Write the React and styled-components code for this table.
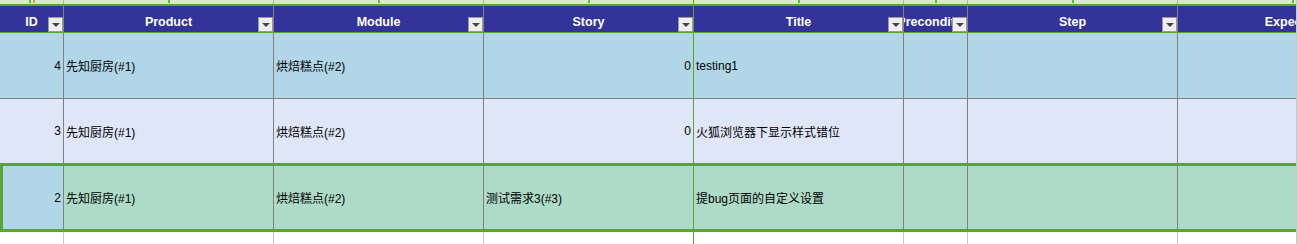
import React from 'react';
import styled, { createGlobalStyle } from 'styled-components';

const GREEN = '#5aa532';
const GRID = '#808080';
const LIGHT_GRID = '#c8c8c8';

const Global = createGlobalStyle`
  html, body { margin: 0; padding: 0; background: #ffffff; overflow: hidden; }
  body { font-family: "Liberation Sans", "Noto Sans CJK SC", sans-serif; }
`;

const columns = [
  { key: 'id', label: 'ID', w: 64, num: true },
  { key: 'product', label: 'Product', w: 210 },
  { key: 'module', label: 'Module', w: 210 },
  { key: 'story', label: 'Story', w: 210, num: true, green: true },
  { key: 'title', label: 'Title', w: 210 },
  { key: 'pre', label: 'Precondition', w: 64 },
  { key: 'step', label: 'Step', w: 210 },
  { key: 'exp', label: 'Expected', w: 230 },
];

const rows = [
  { tone: 'blue', id: '4', product: '先知厨房(#1)', module: '烘焙糕点(#2)', story: '0', title: 'testing1' },
  { tone: 'lav', id: '3', product: '先知厨房(#1)', module: '烘焙糕点(#2)', story: '0', title: '火狐浏览器下显示样式错位' },
  { tone: 'sel', id: '2', product: '先知厨房(#1)', module: '烘焙糕点(#2)', story: '测试需求3(#3)', title: '提bug页面的自定义设置' },
];

const tones = { blue: '#b0d6e8', lav: '#dfe6f8', sel: '#addbc7' };

const Sheet = styled.div`
  width: 1296px;
  height: 244px;
  border-right: 1px solid ${LIGHT_GRID};
  overflow: hidden;
  display: flex;
  flex-direction: column;
`;

const Line = styled.div`
  display: flex;
  flex: none;
  width: max-content;
`;

const TopStrip = styled(Line)`
  height: 4px;
  background: #d8e8cc;
`;

const StripCell = styled.div`
  width: ${p => p.$w}px;
  box-sizing: border-box;
  border-right: 1px solid ${p => (p.$green ? GREEN : '#a8b8a0')};
  display: flex;
  justify-content: center;
  gap: 2px;
`;

const Mark = styled.span`
  width: 2px;
  height: 3px;
  background: ${p => p.$c};
`;

const HeaderRow = styled(Line)`
  height: 26px;
  background: #333399;
  border-top: 2px solid ${GREEN};
  border-bottom: 1px solid ${GREEN};
`;

const HeadCell = styled.div`
  position: relative;
  width: ${p => p.$w}px;
  box-sizing: border-box;
  border-right: 1px solid ${p => (p.$green ? GREEN : GRID)};
  display: flex;
  align-items: flex-end;
  justify-content: center;
  overflow: hidden;
  padding-bottom: 3px;
  color: #ffffff;
  font-weight: bold;
  font-size: 12.5px;
  line-height: 14px;
  white-space: nowrap;
`;

const Filter = styled.span`
  position: absolute;
  right: 0;
  bottom: 0;
  width: 15px;
  height: 15px;
  box-sizing: border-box;
  background: #eeeeee;
  border: 1px solid #9a9a9a;
  display: flex;
  align-items: center;
  justify-content: center;
  &::after {
    content: '';
    border-left: 4px solid transparent;
    border-right: 4px solid transparent;
    border-top: 4px solid #444444;
    margin-top: 1px;
  }
`;

const BodyRow = styled(Line)`
  height: ${p => p.$h}px;
  background: ${p => tones[p.$tone]};
  border-bottom: ${p => (p.$divider ? `1px solid ${GRID}` : 'none')};
  ${p => p.$selected && `
    border-top: 3px solid ${GREEN};
    border-bottom: 3px solid ${GREEN};
    border-left: 3px solid ${GREEN};
  `}
`;

const Cell = styled.div`
  width: ${p => p.$w}px;
  box-sizing: border-box;
  border-right: 1px solid ${p => (p.$green ? GREEN : GRID)};
  background: ${p => p.$bg || 'transparent'};
  display: flex;
  align-items: center;
  justify-content: ${p => (p.$num ? 'flex-end' : 'flex-start')};
  padding: 0 2px;
  font-size: 12px;
  color: #000000;
  white-space: nowrap;
  overflow: hidden;
`;

const EmptyRow = styled(Line)`
  height: 20px;
  background: #ffffff;
`;

const EmptyCell = styled.div`
  width: ${p => p.$w}px;
  box-sizing: border-box;
  border-right: 1px solid ${p => (p.$green ? GREEN : LIGHT_GRID)};
`;

export default function App() {
  return (
    <>
      <Global />
      <Sheet>
        <TopStrip>
          {columns.map((c, i) => (
            <StripCell key={c.key} $w={c.w} $green={c.green}>
              <Mark $c="#6ab04c" />
              {i === 0 && <Mark $c="#d8a040" />}
            </StripCell>
          ))}
        </TopStrip>
        <HeaderRow>
          {columns.map(c => (
            <HeadCell key={c.key} $w={c.w} $green={c.green}>
              {c.label}
              <Filter />
            </HeadCell>
          ))}
        </HeaderRow>
        {rows.map((r, ri) => {
          const selected = r.tone === 'sel';
          const h = ri === 0 ? 65 : ri === 1 ? 64 : 63;
          return (
            <BodyRow key={r.id} $tone={r.tone} $h={h} $divider={ri === 0} $selected={selected}>
              {columns.map((c, ci) => {
                const v = r[c.key] || '';
                const w = selected && ci === 0 ? c.w - 3 : c.w;
                const isNum = c.num && /^\d+$/.test(v);
                return (
                  <Cell
                    key={c.key}
                    $w={w}
                    $green={c.green}
                    $num={isNum}
                    $bg={selected && ci === 0 ? tones.blue : undefined}
                  >
                    {v}
                  </Cell>
                );
              })}
            </BodyRow>
          );
        })}
        <EmptyRow>
          {columns.map(c => (
            <EmptyCell key={c.key} $w={c.w} $green={c.green} />
          ))}
        </EmptyRow>
      </Sheet>
    </>
  );
}
